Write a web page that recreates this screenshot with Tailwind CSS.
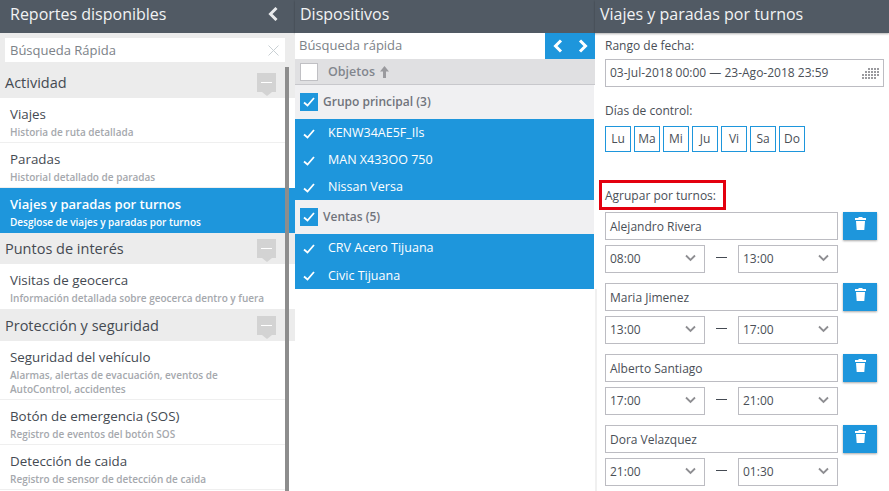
<!DOCTYPE html>
<html lang="es">
<head>
    <meta charset="UTF-8">
    <script src="https://cdn.jsdelivr.net/npm/@tailwindcss/browser@4"></script>
    <title>Reportes</title>
</head>
<body class="h-[491px] w-[889px] overflow-hidden bg-white font-['Open_Sans','Noto_Sans',sans-serif] text-[#444a52]">
<div class="flex h-[491px] w-[889px]">

    <!-- Reportes disponibles -->
    <div class="flex w-[295px] flex-none flex-col">
        <div class="flex h-[33px] flex-none items-center justify-between bg-[#515a64] pb-[6px] pl-[10px] pr-[17px] text-[16px] text-[#f2f3f4] shadow-[0_1px_2px_rgba(0,0,0,0.3)]">
            <span>Reportes disponibles</span>
            <svg width="10" height="14" viewBox="0 0 10 14"><path d="M8.500 1 2.500 7l6 6" fill="none" stroke="#e8eaec" stroke-width="3"/></svg>
        </div>
        <div class="flex h-[34px] flex-none items-center bg-[#ececec] pl-[5px] pr-[10px]">
            <div class="flex h-[24px] w-[280px] items-center justify-between bg-white pl-[5px] pr-[6px] pt-[1px] text-[13px] text-[#7c8288]">
                <span>Búsqueda Rápida</span>
                <svg width="11" height="11" viewBox="0 0 11 11"><path d="M.5.5l10 10M10.500.5l-10 10" stroke="#c9d0d4" stroke-width="1"/></svg>
            </div>
        </div>
        <div class="relative flex-1">
            <div class="h-[31px] flex items-center justify-between bg-[#ececec] pl-[5px] pr-[19px] text-[14.5px]">
                <span>Actividad</span>
                <span class="relative flex h-[19px] w-[19px] items-center justify-center bg-[#d3d3d3] after:absolute after:left-[5px] after:top-[19px] after:border-x-[5px] after:border-t-[4px] after:border-x-transparent after:border-t-[#d3d3d3] after:content-['']"><span class="h-[1px] w-[11px] bg-white"></span></span>
            </div>
            <div class="h-[45px] w-[285px] border-b border-[#efefef] pl-[10px] pt-[7px]">
                <div class="text-[13.35px] leading-[18px]">Viajes</div>
                <div class="mt-[2px] text-[10px] leading-[14px] font-semibold text-[#a5a8ad]">Historia de ruta detallada</div>
            </div>
            <div class="h-[45px] w-[285px] border-b border-[#efefef] pl-[10px] pt-[7px]">
                <div class="text-[13.35px] leading-[18px]">Paradas</div>
                <div class="mt-[2px] text-[10px] leading-[14px] font-semibold text-[#a5a8ad]">Historial detallado de paradas</div>
            </div>
            <div class="h-[45px] bg-[#1e96dc] pl-[10px] pt-[7px] text-white">
                <div class="text-[13px] leading-[18px] font-semibold">Viajes y paradas por turnos</div>
                <div class="mt-[2px] text-[10px] leading-[14px] font-semibold">Desglose de viajes y paradas por turnos</div>
            </div>
            <div class="h-[31px] flex items-center justify-between bg-[#ececec] pl-[5px] pr-[19px] text-[14.5px]">
                <span>Puntos de interés</span>
                <span class="relative flex h-[19px] w-[19px] items-center justify-center bg-[#d3d3d3] after:absolute after:left-[5px] after:top-[19px] after:border-x-[5px] after:border-t-[4px] after:border-x-transparent after:border-t-[#d3d3d3] after:content-['']"><span class="h-[1px] w-[11px] bg-white"></span></span>
            </div>
            <div class="h-[45px] pl-[10px] pt-[7px]">
                <div class="text-[13.35px] leading-[18px]">Visitas de geocerca</div>
                <div class="mt-[2px] text-[10px] leading-[14px] font-semibold text-[#a5a8ad]">Información detallada sobre geocerca dentro y fuera</div>
            </div>
            <div class="h-[32px] flex items-center justify-between bg-[#ececec] pl-[5px] pr-[19px] pt-[1px] text-[14.5px]">
                <span>Protección y seguridad</span>
                <span class="relative flex h-[19px] w-[19px] items-center justify-center bg-[#d3d3d3] after:absolute after:left-[5px] after:top-[19px] after:border-x-[5px] after:border-t-[4px] after:border-x-transparent after:border-t-[#d3d3d3] after:content-['']"><span class="h-[1px] w-[11px] bg-white"></span></span>
            </div>
            <div class="h-[59px] w-[285px] border-b border-[#efefef] pl-[10px] pt-[7px]">
                <div class="text-[13.35px] leading-[18px]">Seguridad del vehículo</div>
                <div class="mt-[2px] text-[10px] leading-[14px] font-semibold text-[#a5a8ad]">Alarmas, alertas de evacuación, eventos de<br>AutoControl, accidentes</div>
            </div>
            <div class="h-[45px] w-[285px] border-b border-[#efefef] pl-[10px] pt-[7px]">
                <div class="text-[13.35px] leading-[18px]">Botón de emergencia (SOS)</div>
                <div class="mt-[2px] text-[10px] leading-[14px] font-semibold text-[#a5a8ad]">Registro de eventos del botón SOS</div>
            </div>
            <div class="h-[45px] w-[285px] border-b border-[#efefef] pl-[10px] pt-[7px]">
                <div class="text-[13.35px] leading-[18px]">Detección de caida</div>
                <div class="mt-[2px] text-[10px] leading-[14px] font-semibold text-[#a5a8ad]">Registro de sensor de detección de caida</div>
            </div>
            <!-- barra de scroll -->
            <div class="absolute bottom-0 left-[285px] top-0 w-[4px] bg-[#8d8d8d]"></div>
        </div>
    </div>

    <!-- Dispositivos -->
    <div class="flex w-[300px] flex-none flex-col">
        <div class="flex h-[33px] flex-none items-center bg-[#515a64] pb-[6px] pl-[5px] text-[16px] text-[#f2f3f4] shadow-[0_1px_2px_rgba(0,0,0,0.3)]">Dispositivos</div>
        <div class="flex h-[26px] flex-none items-center justify-between bg-white pl-[4px] text-[13px] text-[#7c8288]">
            <span>Búsqueda rápida</span>
            <div class="flex h-[26px] w-[50px] items-center justify-between bg-[#1e96dc] pl-[7px] pr-[6px]">
                <svg width="11" height="14" viewBox="0 0 11 14"><path d="M9 1.500 3.500 7 9 12.500" fill="none" stroke="#fff" stroke-width="3"/></svg>
                <svg width="11" height="14" viewBox="0 0 11 14"><path d="M2 1.500 7.500 7 2 12.500" fill="none" stroke="#fff" stroke-width="3"/></svg>
            </div>
        </div>
        <div class="flex h-[26px] flex-none items-center border-b border-[#c8c8cc] bg-[#e0e0e2] pl-[5px] text-[12.5px] font-semibold text-[#82868e]">
            <span class="h-[18px] w-[18px] border border-[#c0c0c4] bg-white"></span>
            <span class="ml-[10px] pt-[1px]">Objetos</span>
            <svg class="ml-[5px]" width="9" height="12" viewBox="0 0 9 12"><path d="M4.500 0 9 5.500H6V12H3V5.500H0z" fill="#9a9a9e"/></svg>
        </div>
        <div class="w-[299px]">
            <div class="flex h-[34px] items-center bg-[#f0f0f2] pl-[5px] text-[12px] font-semibold text-[#70747c]">
                <span class="flex h-[18px] w-[18px] items-center justify-center bg-[#1e96dc]"><svg width="12" height="10" viewBox="0 0 12 10"><path d="M1 5.500 4.500 8.500 11 1" fill="none" stroke="#fff" stroke-width="1.800"/></svg></span>
                <span class="ml-[5px]">Grupo principal (3)</span>
            </div>
            <div class="flex h-[27px] items-center bg-[#1e96dc] pl-[8px] pt-[2px] text-[12.5px] text-white"><svg width="12" height="10" viewBox="0 0 12 10"><path d="M1 5.500 4.500 8.500 11 1" fill="none" stroke="#fff" stroke-width="1.800"/></svg><span class="ml-[13px]">KENW34AE5F_Ils</span></div>
            <div class="flex h-[27px] items-center bg-[#1e96dc] pl-[8px] pt-[2px] text-[12.5px] text-white"><svg width="12" height="10" viewBox="0 0 12 10"><path d="M1 5.500 4.500 8.500 11 1" fill="none" stroke="#fff" stroke-width="1.800"/></svg><span class="ml-[13px]">MAN X433OO 750</span></div>
            <div class="flex h-[27px] items-center bg-[#1e96dc] pl-[8px] pt-[2px] text-[12.5px] text-white"><svg width="12" height="10" viewBox="0 0 12 10"><path d="M1 5.500 4.500 8.500 11 1" fill="none" stroke="#fff" stroke-width="1.800"/></svg><span class="ml-[13px]">Nissan Versa</span></div>
            <div class="flex h-[34px] items-center bg-[#f0f0f2] pl-[5px] text-[12px] font-semibold text-[#70747c]">
                <span class="flex h-[18px] w-[18px] items-center justify-center bg-[#1e96dc]"><svg width="12" height="10" viewBox="0 0 12 10"><path d="M1 5.500 4.500 8.500 11 1" fill="none" stroke="#fff" stroke-width="1.800"/></svg></span>
                <span class="ml-[5px]">Ventas (5)</span>
            </div>
            <div class="flex h-[27px] items-center bg-[#1e96dc] pl-[8px] pt-[2px] text-[12.5px] text-white"><svg width="12" height="10" viewBox="0 0 12 10"><path d="M1 5.500 4.500 8.500 11 1" fill="none" stroke="#fff" stroke-width="1.800"/></svg><span class="ml-[13px]">CRV Acero Tijuana</span></div>
            <div class="flex h-[28px] items-center bg-[#1e96dc] pl-[8px] pt-[2px] text-[12.5px] text-white"><svg width="12" height="10" viewBox="0 0 12 10"><path d="M1 5.500 4.500 8.500 11 1" fill="none" stroke="#fff" stroke-width="1.800"/></svg><span class="ml-[13px]">Civic Tijuana</span></div>
        </div>
        <div class="w-[302px] flex-1 border-r-2 border-[#f0f0f0]"></div>
    </div>

    <!-- Viajes y paradas por turnos -->
    <div class="flex flex-1 flex-col">
        <div class="flex h-[33px] flex-none items-center bg-[#515a64] pb-[6px] pl-[5px] text-[16px] text-[#f2f3f4] shadow-[0_1px_2px_rgba(0,0,0,0.3)]">Viajes y paradas por turnos</div>
        <div class="pl-[10px] pr-[5px] text-[12px] text-[#4a4f57]">
            <div class="mt-[5px] h-[16px] leading-[16px]">Rango de fecha:</div>
            <div class="mt-[5px] flex h-[28px] w-[279px] items-center justify-between border border-[#bcbcc2] pl-[4px] pr-[4px]">
                <span>03-Jul-2018 00:00 — 23-Ago-2018 23:59</span>
                <svg width="17" height="11" viewBox="0 0 17 11" fill="#9a9a9e"><path d="M6 0h2v2H6zM9 0h2v2H9zM12 0h2v2h-2zM15 0h2v2h-2zM3 3h2v2H3zM6 3h2v2H6zM9 3h2v2H9zM12 3h2v2h-2zM15 3h2v2h-2zM0 6h2v2H0zM3 6h2v2H3zM6 6h2v2H6zM9 6h2v2H9zM12 6h2v2h-2zM15 6h2v2h-2zM0 9h2v2H0zM3 9h2v2H3zM6 9h2v2H6zM9 9h2v2H9zM12 9h2v2h-2z"/></svg>
            </div>
            <div class="mt-[16px] h-[16px] leading-[16px]">Días de control:</div>
            <div class="mt-[7px] flex gap-[3px]">
                <span class="flex h-[26px] w-[26px] items-center justify-center border border-[#1e96dc]">Lu</span>
                <span class="flex h-[26px] w-[26px] items-center justify-center border border-[#1e96dc]">Ma</span>
                <span class="flex h-[26px] w-[26px] items-center justify-center border border-[#1e96dc]">Mi</span>
                <span class="flex h-[26px] w-[26px] items-center justify-center border border-[#1e96dc]">Ju</span>
                <span class="flex h-[26px] w-[26px] items-center justify-center border border-[#1e96dc]">Vi</span>
                <span class="flex h-[26px] w-[26px] items-center justify-center border border-[#1e96dc]">Sa</span>
                <span class="flex h-[26px] w-[26px] items-center justify-center border border-[#1e96dc]">Do</span>
            </div>
            <div class="-ml-[6px] mt-[28px] flex h-[30px] w-[127px] items-center border-[3px] border-[#e3000f] pl-[3px] pt-[1px]">Agrupar por turnos:</div>

            <div class="mt-[2px] flex h-[28px] gap-[5px]">
                <div class="flex w-[233px] items-center border border-[#bcbcc2] pl-[4px] pt-[1px]">Alejandro Rivera</div>
                <div class="flex w-[34px] items-center justify-center bg-[#1e96dc] pb-[5px] shadow-[0_1px_2px_rgba(0,0,0,0.35)]"><svg width="11" height="13" viewBox="0 0 11 13" fill="#fff"><path d="M3.500 0h4v1H11v2H0V1h3.500zM1 4h9l-.7 9H1.700z"/></svg></div>
            </div>
            <div class="mt-[5px] flex h-[28px] w-[233px] items-center justify-between">
                <div class="flex h-[28px] w-[100px] items-center justify-between border border-[#bcbcc2] pl-[4px] pr-[8px]"><span>08:00</span><svg class="mb-[2px]" width="11" height="8" viewBox="0 0 11 8"><path d="M1 1.500 5.500 6 10 1.500" fill="none" stroke="#8e8e92" stroke-width="1.800"/></svg></div>
                <span class="mb-[3px] h-[1px] w-[11px] bg-[#444a52]"></span>
                <div class="flex h-[28px] w-[100px] items-center justify-between border border-[#bcbcc2] pl-[4px] pr-[8px]"><span>13:00</span><svg class="mb-[2px]" width="11" height="8" viewBox="0 0 11 8"><path d="M1 1.500 5.500 6 10 1.500" fill="none" stroke="#8e8e92" stroke-width="1.800"/></svg></div>
            </div>

            <div class="mt-[10px] flex h-[28px] gap-[5px]">
                <div class="flex w-[233px] items-center border border-[#bcbcc2] pl-[4px] pt-[1px]">Maria Jimenez</div>
                <div class="flex w-[34px] items-center justify-center bg-[#1e96dc] pb-[5px] shadow-[0_1px_2px_rgba(0,0,0,0.35)]"><svg width="11" height="13" viewBox="0 0 11 13" fill="#fff"><path d="M3.500 0h4v1H11v2H0V1h3.500zM1 4h9l-.7 9H1.700z"/></svg></div>
            </div>
            <div class="mt-[5px] flex h-[28px] w-[233px] items-center justify-between">
                <div class="flex h-[28px] w-[100px] items-center justify-between border border-[#bcbcc2] pl-[4px] pr-[8px]"><span>13:00</span><svg class="mb-[2px]" width="11" height="8" viewBox="0 0 11 8"><path d="M1 1.500 5.500 6 10 1.500" fill="none" stroke="#8e8e92" stroke-width="1.800"/></svg></div>
                <span class="mb-[3px] h-[1px] w-[11px] bg-[#444a52]"></span>
                <div class="flex h-[28px] w-[100px] items-center justify-between border border-[#bcbcc2] pl-[4px] pr-[8px]"><span>17:00</span><svg class="mb-[2px]" width="11" height="8" viewBox="0 0 11 8"><path d="M1 1.500 5.500 6 10 1.500" fill="none" stroke="#8e8e92" stroke-width="1.800"/></svg></div>
            </div>

            <div class="mt-[10px] flex h-[28px] gap-[5px]">
                <div class="flex w-[233px] items-center border border-[#bcbcc2] pl-[4px] pt-[1px]">Alberto Santiago</div>
                <div class="flex w-[34px] items-center justify-center bg-[#1e96dc] pb-[5px] shadow-[0_1px_2px_rgba(0,0,0,0.35)]"><svg width="11" height="13" viewBox="0 0 11 13" fill="#fff"><path d="M3.500 0h4v1H11v2H0V1h3.500zM1 4h9l-.7 9H1.700z"/></svg></div>
            </div>
            <div class="mt-[5px] flex h-[28px] w-[233px] items-center justify-between">
                <div class="flex h-[28px] w-[100px] items-center justify-between border border-[#bcbcc2] pl-[4px] pr-[8px]"><span>17:00</span><svg class="mb-[2px]" width="11" height="8" viewBox="0 0 11 8"><path d="M1 1.500 5.500 6 10 1.500" fill="none" stroke="#8e8e92" stroke-width="1.800"/></svg></div>
                <span class="mb-[3px] h-[1px] w-[11px] bg-[#444a52]"></span>
                <div class="flex h-[28px] w-[100px] items-center justify-between border border-[#bcbcc2] pl-[4px] pr-[8px]"><span>21:00</span><svg class="mb-[2px]" width="11" height="8" viewBox="0 0 11 8"><path d="M1 1.500 5.500 6 10 1.500" fill="none" stroke="#8e8e92" stroke-width="1.800"/></svg></div>
            </div>

            <div class="mt-[10px] flex h-[28px] gap-[5px]">
                <div class="flex w-[233px] items-center border border-[#bcbcc2] pl-[4px] pt-[1px]">Dora Velazquez</div>
                <div class="flex w-[34px] items-center justify-center bg-[#1e96dc] pb-[5px] shadow-[0_1px_2px_rgba(0,0,0,0.35)]"><svg width="11" height="13" viewBox="0 0 11 13" fill="#fff"><path d="M3.500 0h4v1H11v2H0V1h3.500zM1 4h9l-.7 9H1.700z"/></svg></div>
            </div>
            <div class="mt-[5px] flex h-[28px] w-[233px] items-center justify-between">
                <div class="flex h-[28px] w-[100px] items-center justify-between border border-[#bcbcc2] pl-[4px] pr-[8px]"><span>21:00</span><svg class="mb-[2px]" width="11" height="8" viewBox="0 0 11 8"><path d="M1 1.500 5.500 6 10 1.500" fill="none" stroke="#8e8e92" stroke-width="1.800"/></svg></div>
                <span class="mb-[3px] h-[1px] w-[11px] bg-[#444a52]"></span>
                <div class="flex h-[28px] w-[100px] items-center justify-between border border-[#bcbcc2] pl-[4px] pr-[8px]"><span>01:30</span><svg class="mb-[2px]" width="11" height="8" viewBox="0 0 11 8"><path d="M1 1.500 5.500 6 10 1.500" fill="none" stroke="#8e8e92" stroke-width="1.800"/></svg></div>
            </div>
        </div>
    </div>
</div>
</body>
</html>
